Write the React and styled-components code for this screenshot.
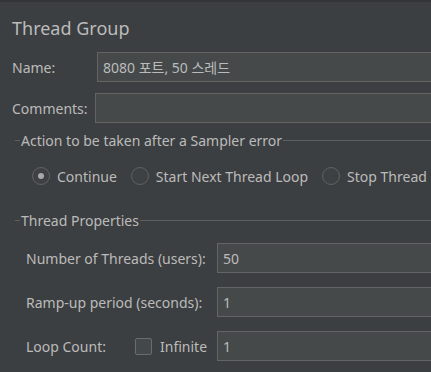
import React from "react";
import styled, { createGlobalStyle } from "styled-components";

const Global = createGlobalStyle`
  html, body { margin: 0; padding: 0; background: #3c3f41; }
  body { font-family: "Noto Sans", "Noto Sans CJK KR", sans-serif; color: #bbbbbb; }
`;

const Page = styled.div`
  width: 431px;
  height: 372px;
  overflow: hidden;
  box-sizing: border-box;
  background: #3c3f41;
  border-top: 2px solid #333537;
  padding: 14px 0 0 12px;
  display: flex;
  flex-direction: column;
`;

const Title = styled.div`
  font-size: 18px;
  line-height: 24px;
  height: 24px;
  margin-bottom: 12px;
`;

const Row = styled.div`
  display: grid;
  grid-template-columns: ${(p) => p.$label}px 1fr;
  align-items: center;
  height: 30px;
  margin-top: ${(p) => p.$gap || 0}px;
  margin-left: ${(p) => p.$indent || 0}px;
  font-size: 14px;
  white-space: nowrap;
`;

const Label = styled.span`
  font-size: 14px;
`;

const Input = styled.div`
  box-sizing: border-box;
  height: 30px;
  width: 600px;
  background: #45494a;
  border: 1px solid #646464;
  padding: 0 5px;
  display: flex;
  align-items: center;
  font-size: 14px;
  color: #bbbbbb;
`;

const Section = styled.div`
  display: flex;
  align-items: center;
  height: 20px;
  margin-top: ${(p) => p.$gap}px;
  margin-left: 3px;
  font-size: 14px;
  white-space: nowrap;
  &::before {
    content: "";
    width: 5px;
    height: 1px;
    background: #5e6060;
    margin-right: 1px;
  }
  &::after {
    content: "";
    flex: 1;
    height: 1px;
    background: #5e6060;
    margin-left: 1px;
  }
`;

const RadioRow = styled.div`
  display: flex;
  align-items: center;
  height: 20px;
  margin-top: 16px;
  margin-left: 20px;
  font-size: 14px;
  white-space: nowrap;
`;

const RadioItem = styled.label`
  display: flex;
  align-items: center;
  gap: 7px;
  margin-right: 14px;
`;

const RadioCircle = styled.span`
  box-sizing: border-box;
  width: 18px;
  height: 18px;
  border-radius: 50%;
  border: 1px solid #5f6263;
  background: #3e4143;
  display: flex;
  align-items: center;
  justify-content: center;
  &::after {
    content: "";
    display: ${(p) => (p.$checked ? "block" : "none")};
    width: 6px;
    height: 6px;
    border-radius: 50%;
    background: #a8a8a8;
  }
`;

const LoopLabel = styled.div`
  display: flex;
  align-items: center;
`;

const LoopText = styled.span`
  width: 109px;
`;

const CheckBox = styled.span`
  box-sizing: border-box;
  width: 17px;
  height: 17px;
  border: 1px solid #6b6b6b;
  border-radius: 2px;
  background: #43494a;
  margin-right: 8px;
`;

export default function App() {
  return (
    <>
      <Global />
      <Page>
        <Title>Thread Group</Title>
        <Row $label={85}>
          <Label>Name:</Label>
          <Input>8080 포트, 50 스레드</Input>
        </Row>
        <Row $label={83} $gap={11}>
          <Label>Comments:</Label>
          <Input />
        </Row>
        <Section $gap={7}>Action to be taken after a Sampler error</Section>
        <RadioRow>
          <RadioItem>
            <RadioCircle $checked />
            Continue
          </RadioItem>
          <RadioItem>
            <RadioCircle />
            Start Next Thread Loop
          </RadioItem>
          <RadioItem>
            <RadioCircle />
            Stop Thread
          </RadioItem>
        </RadioRow>
        <Section $gap={24}>Thread Properties</Section>
        <Row $label={191} $indent={14} $gap={13}>
          <Label>Number of Threads (users):</Label>
          <Input>50</Input>
        </Row>
        <Row $label={191} $indent={14} $gap={14}>
          <Label>Ramp-up period (seconds):</Label>
          <Input>1</Input>
        </Row>
        <Row $label={191} $indent={14} $gap={14}>
          <LoopLabel>
            <LoopText>Loop Count:</LoopText>
            <CheckBox />
            Infinite
          </LoopLabel>
          <Input>1</Input>
        </Row>
      </Page>
    </>
  );
}
